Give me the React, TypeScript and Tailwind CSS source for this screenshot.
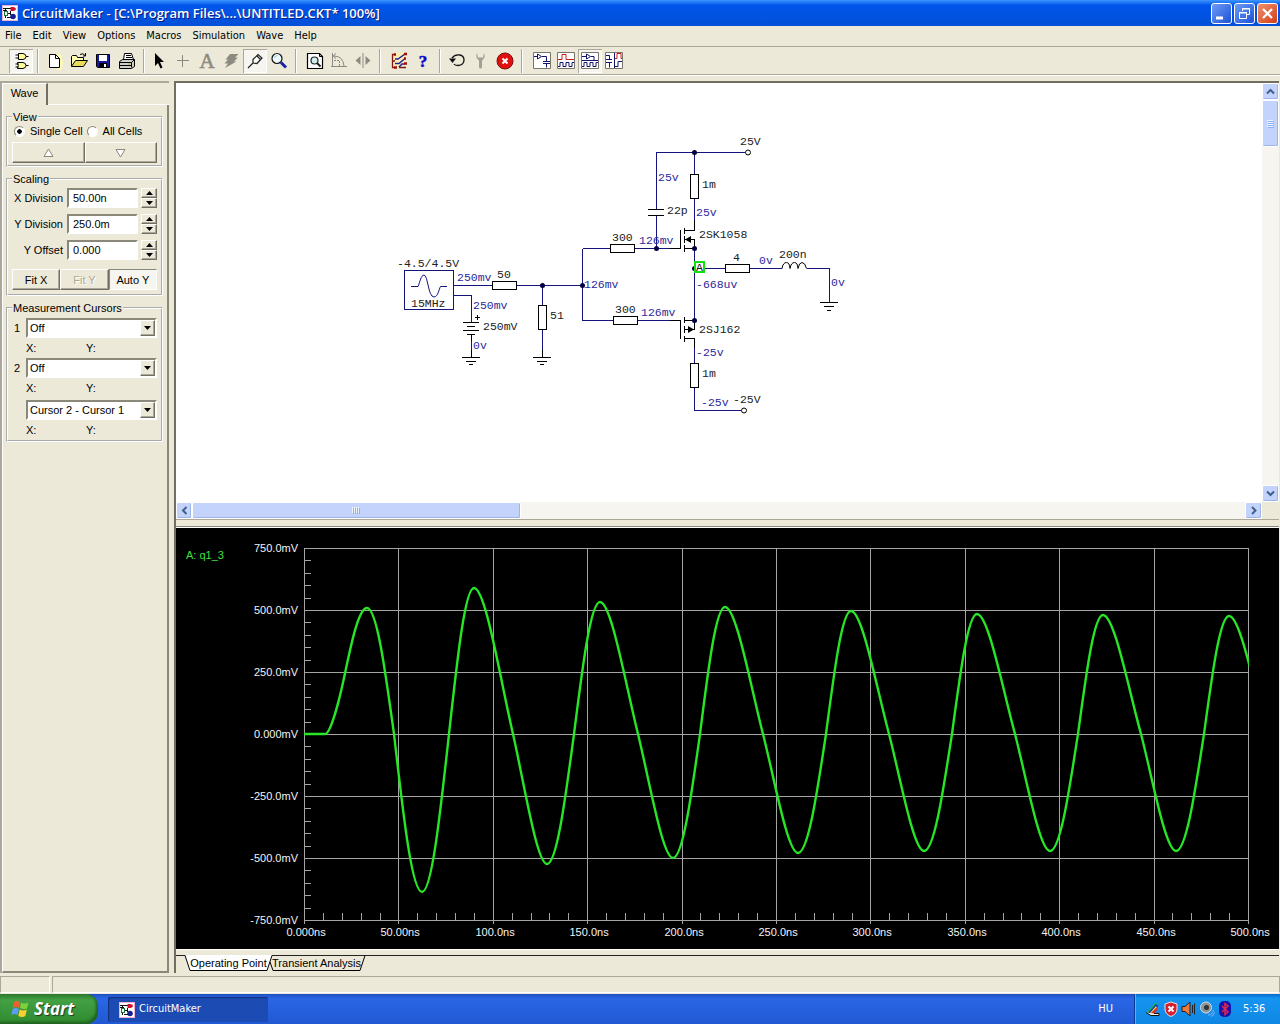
import React from "react";

const ui = "font-['DejaVu_Sans_Condensed','DejaVu_Sans',sans-serif]";
const sunken =
  "border-2 border-t-[#8a8878] border-l-[#8a8878] border-r-white border-b-white";
const raised =
  "border border-t-white border-l-white border-r-[#716f64] border-b-[#716f64] shadow-[inset_-1px_-1px_0_#aca899]";
const pressed =
  "border border-t-[#8a8878] border-l-[#8a8878] border-r-white border-b-white bg-[#f6f5f0]";

/* ---------- icons ---------- */

function AppIcon() {
  return (
    <svg width="16" height="16" viewBox="0 0 16 16" aria-hidden="true">
      <rect width="16" height="16" fill="#f0b4d0" />
      <rect x="1" y="1" width="14" height="14" fill="#fff" />
      <path d="M1 3.500H10M1 5.500H5M3.500 3.500V13M3.500 8.500H9M5 12.500H10" stroke="#111" fill="none" />
      <rect x="2.500" y="6.500" width="3" height="4" fill="#fff" stroke="#137a3a" />
      <path d="M8.500 2h3q2.500 .5 2.500 2t-2.500 2h-3z" fill="#d01030" />
      <circle cx="11" cy="11.500" r="2.800" fill="#182090" />
      <path d="M8.500 6v4" stroke="#111" />
    </svg>
  );
}

const toolIcons: Record<string, React.ReactNode> = {
  parts: (
    <g fill="#ffff9c" stroke="#000">
      <path d="M9.500 4.500H14q3 .5 3 3t-3 3H9.500z" />
      <path d="M6.500 6h3M6.500 9h3M17 7.500h2.500" />
      <path d="M8.500 13.500H14q3 .5 3 3t-3 3H8.500q1.500-3 0-6z" />
      <path d="M6.500 15h3M6.500 18h3M17 16.500h2.500" />
    </g>
  ),
  new: (
    <>
      <path d="M15 4l4 3v3l1 4-2 7h-4z" fill="#fffbb0" />
      <path d="M6.500 5.500h6l4 4v9h-10z" fill="#fff" stroke="#000" />
      <path d="M12.500 5.500v4h4" fill="none" stroke="#000" />
    </>
  ),
  open: (
    <g stroke="#000">
      <path d="M4.500 17.500v-10l1-1h4l1 2h6v3" fill="#ffffb0" />
      <path d="M4.500 17.500l4-6h12l-4 6z" fill="#e6dc5a" />
      <path d="M13 5.500q3-2 5 1M18.500 4v3H16" fill="none" />
    </g>
  ),
  save: (
    <>
      <path d="M5.500 5.500h13v13h-12l-1-1z" fill="#1818a0" stroke="#000" />
      <rect x="8" y="6" width="8" height="6" fill="#fff" />
      <rect x="8" y="14" width="8" height="4" fill="#000" />
      <rect x="13" y="15" width="2" height="3" fill="#fff" />
    </>
  ),
  print: (
    <g stroke="#000">
      <path d="M8.500 10.500l1-6h7l2 6" fill="#fff" />
      <path d="M11 6.500h5M11 8.500h6" />
      <path d="M4.500 12.500l3-2h12v7l-3 2h-12z" fill="#cfcfc8" />
      <path d="M4.500 13.500h12v5M5 16.500h11M16.500 13.500l3-3" fill="none" />
      <path d="M13 15h2" stroke="#c8b400" />
    </g>
  ),
  pointer: <path d="M8 4v13l3-3 2.500 5.500 2-1L13 13h4z" fill="#000" />,
  wire: <path d="M6 11.500h12M11.500 6v12" stroke="#8d8b80" />,
  text: (
    <text x="12" y="19" textAnchor="middle" fontSize="21" fontFamily="Liberation Serif, serif" fill="#8d8b80" stroke="#8d8b80" strokeWidth="0.600">
      A
    </text>
  ),
  bolt: <path d="M11 5h8.500l-3.500 3.500h3l-4 4h2.500L6 19l3-4.500H5.500L9 10.500H6.500z" fill="#8d8b80" />,
  probe: (
    <path d="M5 19l5-5M10 10.500l5-5 4 3.500-5 5.500-4-.5zM13.500 6.500l4 4" fill="#fff" stroke="#222" strokeWidth="1.200" />
  ),
  zoom: (
    <>
      <circle cx="10" cy="9.500" r="5" fill="#eef8ff" stroke="#111" strokeWidth="1.200" />
      <path d="M14 13.500l5 5" stroke="#1a22a8" strokeWidth="3" />
      <path d="M7.500 9q.5-2.500 3-2.500" stroke="#7fc4d8" fill="none" />
    </>
  ),
  fit: (
    <>
      <path d="M4.500 4.500h12l3 3v12h-15z" fill="#fff" stroke="#000" strokeWidth="1.200" />
      <path d="M16.500 4.500v3h3" fill="none" stroke="#000" />
      <circle cx="11.500" cy="11.500" r="3.500" fill="#cfeef0" stroke="#222" strokeWidth="1.200" />
      <path d="M14 14l3.500 3.500" stroke="#222" strokeWidth="2" />
    </>
  ),
  rotate: (
    <g fill="none" stroke="#8d8b80">
      <path d="M5.500 4v14M4 17.500h16M9 4.500l-3 2.500 3 2.500" />
      <path d="M7 7q9 0 10 10" />
      <path d="M7 11.500h5.500v6" strokeDasharray="2 1" />
    </g>
  ),
  mirror: (
    <>
      <path d="M9.500 7v9L4.500 11.500zM14.500 7v9l5-4.500z" fill="#8d8b80" />
      <path d="M12 4v15" stroke="#8d8b80" />
    </>
  ),
  run: (
    <>
      <rect x="4" y="4" width="15" height="15" fill="#fdeeb0" />
      <path d="M8 5.500H5.500v13H8M5.500 12H8M12 18.500h7" fill="none" stroke="#801818" strokeWidth="1.300" />
      <path d="M8 10h3l7-5M8 14.500h4l6-5M12 18l3-3h3" fill="none" stroke="#2222a0" strokeWidth="1.500" />
      <path d="M17 5h3M17 9.500h2M17 14.500h3M7 5.500h2M7 18.500h3" stroke="#a01010" strokeWidth="2.500" />
    </>
  ),
  help: (
    <text x="12" y="18" textAnchor="middle" fontSize="17" fontWeight="700" fontFamily="Liberation Serif, serif" fill="#0a0ac8" stroke="#0a0ac8" strokeWidth="0.500">
      ?
    </text>
  ),
  reset: (
    <>
      <path d="M7 9q3-4 8-3 4 1 4 5 0 5-6 5.500-3 0-4-1.500" fill="none" stroke="#111" strokeWidth="1.300" />
      <path d="M4 9.500h7L7.500 14z" fill="#111" />
    </>
  ),
  tool: (
    <path d="M8 4q-2 4 1.500 7l.5 1v6q0 1.500 1.500 1.500T13 18v-6l.5-1Q17 8 15 4l-1 4.500h-5z" fill="#a3a196" />
  ),
  stop: (
    <>
      <circle cx="12" cy="12" r="8" fill="#e01010" stroke="#7c0c0c" />
      <path d="M9.500 9.500l5 5M14.500 9.500l-5 5" stroke="#fff" strokeWidth="2" />
    </>
  ),
  schematic: (
    <g fill="none">
      <path d="M3.500 3.500h17v16h-17z" fill="#fff" stroke="#77756c" />
      <path d="M4 7.500h3M7.500 5v5l4-2.500zM12 7.500h4.500v5M13 12.500h7M13 14.500h7M16.500 14.500v4" stroke="#15156a" />
    </g>
  ),
  waves: (
    <g fill="none">
      <path d="M3.500 3.500h17v16h-17z" fill="#fff" stroke="#77756c" />
      <path d="M4 10.500h4v-5h4v5h8" stroke="#d01818" />
      <path d="M4 17.500h2v-4h3v4h3v-4h3v4h3v-4h2" stroke="#15156a" />
    </g>
  ),
  splitH: (
    <g fill="none">
      <path d="M3.500 3.500h17v16h-17z" fill="#fff" stroke="#77756c" />
      <path d="M4 7.500h4M8.500 5v5l4-2.500zM13 7.500h3v4M4 11.500h16M4 17.500h2v-4h3v4h3v-4h3v4h3v-4h2" stroke="#15156a" />
    </g>
  ),
  splitV: (
    <g fill="none">
      <path d="M3.500 3.500h17v16h-17z" fill="#fff" stroke="#77756c" />
      <path d="M4 6.500h3.500v4M4 10.500h6M4 13.500h6M7.500 13.500v5M12.500 4v15" stroke="#15156a" />
      <path d="M13 9.500h2v-5h4v5h1" stroke="#d01818" />
      <path d="M13 17.500h3v-5h4" stroke="#15156a" />
    </g>
  ),
};

const toolGroups: { lead: string; items: [string, string, boolean?][] }[] = [
  { lead: "pl-[9px]", items: [["parts", "Parts", true]] },
  { lead: "pl-1", items: [["new", "New"], ["open", "Open"], ["save", "Save"], ["print", "Print"]] },
  {
    lead: "pl-0.5",
    items: [["pointer", "Arrow"], ["wire", "Wire"], ["text", "Text"], ["bolt", "Delete"], ["probe", "Probe", true], ["zoom", "Zoom"]],
  },
  { lead: "pl-1.5", items: [["fit", "Fit to window"], ["rotate", "Rotate"], ["mirror", "Mirror"]] },
  { lead: "pl-1.5", items: [["run", "Mode"], ["help", "Help"]] },
  { lead: "pl-1", items: [["reset", "Reset"], ["tool", "Step"], ["stop", "Stop"]] },
  {
    lead: "pl-[7px]",
    items: [["schematic", "Schematic"], ["waves", "Waveforms"], ["splitH", "Split horizontally", true], ["splitV", "Split vertically"]],
  },
];

function Toolbar() {
  return (
    <div className="flex h-7 shrink-0 items-center border-b border-[#aca899]" role="toolbar">
      {toolGroups.map((g, i) => (
        <React.Fragment key={i}>
          {i > 0 && <div className="ml-1 h-6 w-0.5 border-l border-[#aca899] border-r border-r-white" />}
          <div className={`flex ${g.lead}`}>
            {g.items.map(([icon, label, on]) => (
              <button
                key={icon}
                aria-label={label}
                className={`flex size-6 items-center justify-center ${on ? "bg-[#f6f5f0] shadow-[inset_1px_1px_0_#aca899,inset_-1px_-1px_0_#ffffff]" : ""}`}
              >
                <svg width="24" height="24" viewBox="0 0 24 24" fill="none" aria-hidden="true">
                  {toolIcons[icon]}
                </svg>
              </button>
            ))}
          </div>
        </React.Fragment>
      ))}
    </div>
  );
}

function TitleBar() {
  const base = "flex size-[21px] items-center justify-center rounded-[3px] border border-white";
  return (
    <header className="flex h-[26px] shrink-0 items-center bg-linear-to-b from-[#3d95ff] via-[#0055ea] via-20% to-[#0250d8] px-0.5">
      <AppIcon />
      <h1 className="ml-1 flex-1 pt-px font-['Open_Sans',sans-serif] text-[13px] font-semibold text-white [text-shadow:1px_1px_0_#0a1883]">
        CircuitMaker - [C:\Program Files\...\UNTITLED.CKT* 100%]
      </h1>
      <div className="flex gap-0.5">
        <button aria-label="Minimize" className={`${base} bg-linear-to-br from-[#6f9af5] to-[#1c4fd8]`}>
          <svg width="19" height="19" viewBox="0 0 19 19"><path d="M4 14h7" stroke="#fff" strokeWidth="3" /></svg>
        </button>
        <button aria-label="Restore" className={`${base} bg-linear-to-br from-[#6f9af5] to-[#1c4fd8]`}>
          <svg width="19" height="19" viewBox="0 0 19 19" fill="none" stroke="#fff">
            <path d="M7.500 7V4.500h7v6H12" /><path d="M7 5h8" /><path d="M4.500 8.500h7v6h-7z" /><path d="M4 9h8" />
          </svg>
        </button>
        <button aria-label="Close" className={`${base} bg-linear-to-br from-[#f0906c] to-[#d23a10]`}>
          <svg width="19" height="19" viewBox="0 0 19 19"><path d="M5 5l9 9M14 5l-9 9" stroke="#fff" strokeWidth="2.200" /></svg>
        </button>
      </div>
    </header>
  );
}

/* ---------- side panel ---------- */

function Group({ title, className, children }: { title: string; className: string; children: React.ReactNode }) {
  return (
    <fieldset className={`mr-1 ml-[3px] border-2 border-white px-1 [border-style:groove] ${className}`}>
      <legend className="h-3 px-px leading-3">{title}</legend>
      {children}
    </fieldset>
  );
}

function Spin({ id, label, value }: { id: string; label: string; value: string }) {
  return (
    <div className="flex h-5 items-center">
      <label htmlFor={id} className="flex-1 pr-1 text-right leading-4 whitespace-nowrap">{label}</label>
      <input id={id} defaultValue={value} className={`h-5 w-[71px] rounded-none bg-white px-1 text-[11px] outline-none ${sunken}`} />
      <div className="ml-[3px] flex h-5 w-4 flex-col">
        {["up", "down"].map((d) => (
          <button key={d} aria-label={`${label} ${d}`} className={`flex flex-1 items-center justify-center ${raised}`}>
            <svg width="7" height="4" viewBox="0 0 7 4"><path d={d === "up" ? "M0 4h7L3.500 0z" : "M0 0h7L3.500 4z"} /></svg>
          </button>
        ))}
      </div>
    </div>
  );
}

function Choice({ label, value, mark }: { label: string; value: string; mark?: string }) {
  return (
    <div className="flex h-5 items-center">
      <span className="w-[14px] pl-0.5">{mark}</span>
      <div className="relative h-5 flex-1">
        <select aria-label={label} className={`h-5 w-full appearance-none rounded-none bg-white pl-0.5 text-[11px] outline-none ${sunken}`}>
          <option>{value}</option>
        </select>
        <span className={`pointer-events-none absolute top-0.5 right-0.5 flex h-4 w-[15px] items-center justify-center bg-[#ece9d8] ${raised}`}>
          <svg width="7" height="4" viewBox="0 0 7 4"><path d="M0 0h7L3.500 4z" /></svg>
        </span>
      </div>
    </div>
  );
}

function XY({ className }: { className: string }) {
  return (
    <div className={`flex items-center pl-[14px] ${className}`}>
      <span className="w-[60px]">X:</span>
      <span>Y:</span>
    </div>
  );
}

function Radio({ label, on }: { label: string; on?: boolean }) {
  return (
    <label className="flex items-center">
      <input
        type="radio"
        name="view"
        defaultChecked={on}
        className="mr-[5px] size-[11px] appearance-none rounded-full border border-[#8a8878] border-r-white border-b-white bg-white checked:bg-[radial-gradient(circle,#000_2px,#fff_2.500px)]"
      />
      {label}
    </label>
  );
}

function SidePanel() {
  const btn = "flex h-[21px] flex-1 items-center justify-center";
  return (
    <aside className="flex w-[169px] shrink-0 flex-col border-t-2 border-l-2 border-[#aca899] font-['Liberation_Sans',sans-serif] text-[11px] leading-3">
      <div className="flex h-[22px]">
        <button className="w-[46px] border-t border-l border-white border-r-2 border-r-[#716f64] pb-[3px] text-center">Wave</button>
        <div className="flex-1 border-b border-white" />
      </div>
      <div className="flex-1 border-r-2 border-b-2 border-l border-[#8a8878] border-l-white pt-1.5">
        <Group title="View" className="pb-0.5">
          <div className="mt-px flex h-[14px] items-center gap-1 pl-0.5">
            <Radio label="Single Cell" on />
            <Radio label="All Cells" />
          </div>
          <div className="mt-1 flex">
            <button aria-label="Previous cell" className={`${btn} ${raised}`}>
              <svg width="11" height="10" viewBox="0 0 11 10"><path d="M1 8.500h9L5.500 1z" fill="#fff" stroke="#8a8878" /></svg>
            </button>
            <button aria-label="Next cell" className={`${btn} ${raised}`}>
              <svg width="11" height="10" viewBox="0 0 11 10"><path d="M1 1.500h9L5.500 9z" fill="#fff" stroke="#8a8878" /></svg>
            </button>
          </div>
        </Group>
        <Group title="Scaling" className="mt-1.5 pb-1">
          <div className="mt-[3px] flex flex-col gap-1.5">
            <Spin id="xdiv" label="X Division" value="50.00n" />
            <Spin id="ydiv" label="Y Division" value="250.0m" />
            <Spin id="yoff" label="Y Offset" value="0.000" />
          </div>
          <div className="mt-[9px] flex">
            <button className={`${btn} ${raised}`}>Fit X</button>
            <button disabled className={`${btn} ${raised} text-[#aca899] [text-shadow:1px_1px_0_#fff]`}>Fit Y</button>
            <button aria-pressed="true" className={`${btn} ${pressed}`}>Auto Y</button>
          </div>
        </Group>
        <Group title="Measurement Cursors" className="mt-1.5">
          <div className="pt-1">
            <Choice label="Cursor 1" value="Off" mark="1" />
            <XY className="h-5" />
            <Choice label="Cursor 2" value="Off" mark="2" />
            <XY className="mb-0.5 h-5" />
            <Choice label="Cursor difference" value="Cursor 2 - Cursor 1" />
            <XY className="h-5" />
          </div>
        </Group>
      </div>
    </aside>
  );
}

/* ---------- schematic ---------- */

const notes: [number, number, string, boolean?][] = [
  [397, 267, "-4.5/4.5V"], [411, 307, "15MHz"], [497, 278, "50"], [550, 319, "51"], [483, 330, "250mV"],
  [612, 241, "300"], [615, 313, "300"], [667, 214, "22p"], [702, 188, "1m"], [702, 377, "1m"],
  [740, 145, "25V"], [733, 403, "-25V"], [699, 238, "2SK1058"], [699, 333, "2SJ162"], [733, 261, "4"], [779, 258, "200n"],
  [457, 281, "250mv", true], [473, 309, "250mv", true], [473, 349, "0v", true], [584, 288, "126mv", true],
  [639, 244, "126mv", true], [641, 316, "126mv", true], [658, 181, "25v", true], [696, 216, "25v", true],
  [696, 288, "-668uv", true], [696, 356, "-25v", true], [701, 406, "-25v", true], [759, 264, "0v", true], [831, 286, "0v", true],
];

function Schematic() {
  return (
    <svg width="1086" height="419" viewBox="176 83 1086 419" fill="none" role="img" aria-label="Circuit schematic">
      <g stroke="#14147c" shapeRendering="crispEdges">
        <path d="M404.500 270.500h49v39h-49z" />
        <path d="M454 285.500h38M454 295.500h17.500V322M517 285.500h65.500M542.500 285v20M542.500 330v28M471.500 340v17M582.500 248.500V320.500M582.500 248.500H610M582.500 320.500H613" />
        <path d="M635 248.500h45M638 320.500h42M656.500 248V216M656.500 209V152.500H745M694.500 152v22M694.500 199v32M694.500 249v71M700 268.500h25M750 268.500h32M807 268.500h22.500V302M694.500 345v18M694.500 388v22.500H741" />
      </g>
      <path d="M411 286.500h7C420 282 421 275 424 275c4 0 4 22 10 22 4 0 5-8 6.500-10.500H447" stroke="#14147c" />
      <g stroke="#000" shapeRendering="crispEdges">
        <path d="M492.500 281.500h24v8h-24zM538.500 305.500h8v24h-8zM610.500 244.500h24v8h-24zM613.500 316.500h24v8h-24zM690.500 174.500h8v24h-8zM690.500 363.500h8v24h-8zM725.500 264.500h24v8h-24z" />
        <path d="M463 322.500h16M467 326.500h8M463 330.500h16M467 334.500h8M471.500 335v6M475 317.500h5M477.500 315v5" />
        <path d="M462 357.500h18M466 361.500h10M469 364.500h4M533 357.500h18M537 361.500h10M540 364.500h4M820 302.500h18M824 306.500h10M827 310.500h4" />
        <path d="M648 209.500h16M648 215.500h16" />
        <path d="M670 248.500h10.500V230M684.500 228v6M684.500 236v7M684.500 245v7M684 230.500h10.500V220M684 239.500h10.500M684 248.500h10.500V239" />
        <path d="M670 320.500h10.500V339M684.500 317v6M684.500 326v7M684.500 336v6M684 320.500h10.500V329.500H684M684 338.500h10.500V348" />
        <path d="M542.500 350v8M471.500 350v7" />
      </g>
      <path d="M685 239.500l6-3.500v7zM694 329.500l-6-3.500v7z" fill="#000" />
      <path d="M782 268.500q1-6 4.500-6 3 0 3.500 6 1-6 4.500-6 3 0 3.500 6 1-6 4-6 3 0 4.500 6" stroke="#000" />
      <g fill="#000040">
        {[[542, 285], [582, 285], [656, 248], [694, 152], [694, 248], [694, 268], [694, 320]].map(([x, y]) => (
          <circle key={`${x}-${y}`} cx={x + 0.5} cy={y + 0.5} r="2.500" />
        ))}
      </g>
      <circle cx="748" cy="152.500" r="2.500" fill="#fff" stroke="#000" />
      <circle cx="744" cy="410.500" r="2.500" fill="#fff" stroke="#000" />
      <g fontFamily="Liberation Mono, monospace" fontSize="11.500">
        {notes.map(([x, y, t, net], i) => (
          <text key={i} x={x} y={y} fill={net ? "#2a2a9c" : "#222"}>{t}</text>
        ))}
        <rect x="695" y="262" width="9" height="10" fill="#fff" stroke="#10e010" strokeWidth="2" />
        <text x="696" y="271" fill="#111">A</text>
      </g>
    </svg>
  );
}

/* ---------- waveform ---------- */

const ZERO = 734;
/* Alternating extremes of the trace: x, y and the x where it next crosses zero. */
const extremes: [number, number, number][] = [
  [367, 608, 394], [422, 892, 449], [474, 588, 513], [547, 864, 574], [600, 602, 638], [673, 858, 700],
  [725, 607, 763], [798, 853, 826], [851, 611, 889], [924, 851, 952], [977, 614, 1015], [1050, 851, 1078],
  [1103, 615, 1141], [1176, 851, 1204], [1229, 616, 1267],
];

function tracePath() {
  let d = "M304 734H325C330 734 338 706 344 678C350 650 358 608 367 608";
  extremes.forEach(([x, y, cross], i) => {
    const soft = i % 2 === 0 && i > 0;
    const lead = soft ? 0.3 : 0.361;
    const rise = soft ? 0.62 : 0.488;
    const w = cross - x;
    const h = ZERO - y;
    d += `C${x + w * lead} ${y} ${x + w * 0.67} ${y + h * rise} ${cross} ${ZERO}`;
    const next = extremes[i + 1];
    if (next) {
      const nw = next[0] - cross;
      const nh = next[1] - ZERO;
      d += `C${cross + nw * 0.33} ${ZERO + nh * (1 - rise)} ${next[0] - nw * lead} ${next[1]} ${next[0]} ${next[1]}`;
    }
  });
  return d;
}

const xLabels = ["0.000ns", "50.00ns", "100.0ns", "150.0ns", "200.0ns", "250.0ns", "300.0ns", "350.0ns", "400.0ns", "450.0ns", "500.0ns"];
const yLabels = ["750.0mV", "500.0mV", "250.0mV", "0.000mV", "-250.0mV", "-500.0mV", "-750.0mV"];

function WaveChart() {
  const gx = (i: number) => Math.round(304 + i * 94.4) + 0.5;
  return (
    <svg className="block w-full" viewBox="176 528 1103 421" preserveAspectRatio="xMinYMin meet" role="img" aria-label="Transient analysis waveform">
      <clipPath id="plot"><rect x="304" y="548" width="945" height="373" /></clipPath>
      <g stroke="#a4a4a4" shapeRendering="crispEdges">
        {xLabels.map((_, i) => <path key={i} d={`M${gx(i)} 548V924`} />)}
        {yLabels.map((_, i) => <path key={i} d={`M304 ${548.5 + i * 62}H1249`} />)}
        {Array.from({ length: 30 }, (_, i) => <path key={i} d={`M304 ${Math.round(548 + i * 12.4) + 0.5}h7`} />)}
        {Array.from({ length: 50 }, (_, i) => <path key={i} d={`M${Math.round(304 + i * 18.88) + 0.5} 913v7`} />)}
      </g>
      <path d={tracePath()} fill="none" stroke="#26e626" strokeWidth="2.400" clipPath="url(#plot)" />
      <g fontFamily="Liberation Sans, sans-serif" fontSize="11" fill="#f4f4f4">
        {yLabels.map((t, i) => <text key={t} x="298" y={552 + i * 62} textAnchor="end">{t}</text>)}
        {xLabels.map((t, i) => <text key={t} x={gx(i) - 18} y="936">{t}</text>)}
        <text x="186" y="559" fill="#3fe03f">A: q1_3</text>
      </g>
    </svg>
  );
}

/* ---------- document area ---------- */

const scrollBtn =
  "flex shrink-0 items-center justify-center rounded-[2px] border border-white bg-[#c3d3fb] shadow-[inset_-1px_-1px_0_#9fb5ea]";

function Arrow({ d }: { d: string }) {
  return <svg width="9" height="9" viewBox="0 0 9 9" fill="none"><path d={d} stroke="#42608c" strokeWidth="2" /></svg>;
}

function Documents() {
  return (
    <section className="mr-px flex min-w-0 flex-1 flex-col border-t-2 border-l-2 border-[#716f64]">
      <div className="flex h-[419px] min-w-0 bg-white">
        <div className="min-w-0 flex-1 overflow-hidden"><Schematic /></div>
        <div className="flex w-[17px] shrink-0 flex-col bg-[#f6f5f0]">
          <button aria-label="Scroll up" className={`h-[17px] ${scrollBtn}`}><Arrow d="M1 6.500l3.500-3.500L8 6.500" /></button>
          <div className={`h-[47px] ${scrollBtn}`}>
            <svg width="7" height="8" viewBox="0 0 7 8"><path d="M0 .5h6M0 2.500h6M0 4.500h6M0 6.500h6" stroke="#eef4fe" /><path d="M1 1.500h6M1 3.500h6M1 5.500h6M1 7.500h6" stroke="#8cb0f8" /></svg>
          </div>
          <div className="flex-1" />
          <button aria-label="Scroll down" className={`h-[17px] ${scrollBtn}`}><Arrow d="M1 2.500L4.500 6 8 2.500" /></button>
        </div>
      </div>
      <div className="flex h-[17px] shrink-0 bg-[#f6f5f0]">
        <button aria-label="Scroll left" className={`w-4 ${scrollBtn}`}><Arrow d="M6.500 1L3 4.500 6.500 8" /></button>
        <div className={`w-[329px] ${scrollBtn}`}>
          <svg width="9" height="7" viewBox="0 0 9 7"><path d="M.5 0v6M2.500 0v6M4.500 0v6M6.500 0v6" stroke="#eef4fe" /><path d="M1.500 1v6M3.500 1v6M5.500 1v6M7.500 1v6" stroke="#8cb0f8" /></svg>
        </div>
        <div className="flex-1" />
        <button aria-label="Scroll right" className={`w-[17px] ${scrollBtn}`}><Arrow d="M3 1l3.500 3.500L3 8" /></button>
        <div className="w-[17px] bg-[#ece9d8]" />
      </div>
      <div className="h-2 shrink-0 border-t border-b border-t-[#aca899] border-b-[#8a8878] bg-[#ece9d8]" />
      <div className="border-t border-white bg-black"><WaveChart /></div>
      <div className="h-[7px] shrink-0 border-t border-b border-t-white border-b-[#222] bg-[#ece9d8]" />
      <div className="flex flex-1 pl-2 font-['Liberation_Sans',sans-serif] text-[11px] leading-[14px]" role="tablist">
        <button role="tab" aria-selected="true" className="relative -mt-px h-4 w-[89px]">
          <svg className="absolute inset-0" width="89" height="16" viewBox="0 0 89 16" aria-hidden="true">
            <path d="M1 0l5 15.500h77L88 0z" fill="#fff" /><path d="M1 .5l5 15h77L88 .5" fill="none" stroke="#000" />
          </svg>
          <span className="relative whitespace-nowrap">Operating Point</span>
        </button>
        <button role="tab" aria-selected="false" className="relative -mt-px -ml-1.5 h-4 w-[99px]">
          <svg className="absolute inset-0" width="99" height="16" viewBox="0 0 99 16" aria-hidden="true">
            <path d="M3 7l3 8.500h87L98 .5" fill="none" stroke="#000" />
          </svg>
          <span className="relative whitespace-nowrap">Transient Analysis</span>
        </button>
      </div>
    </section>
  );
}

/* ---------- taskbar ---------- */

function Taskbar() {
  return (
    <footer className={`flex h-[30px] shrink-0 bg-linear-to-b from-[#1f4fc0] via-[#2a66e4] via-15% to-[#2159d4] text-[11px] text-white ${ui}`}>
      <button className="flex w-[98px] items-center rounded-r-xl bg-linear-to-b from-[#2c7a2c] via-[#43a043] via-20% to-[#2f8a2f] pl-[11px] shadow-[inset_-2px_-2px_3px_#1d5f1d]">
        <svg width="19" height="18" viewBox="0 0 19 18" aria-hidden="true">
          <path d="M3 2q3-2 6 0L8 8q-3-2-6 0z" fill="#f0602c" />
          <path d="M10 2.500q3 2 7.500 0L16 8.500q-3 1.500-7-.5z" fill="#7ed03c" />
          <path d="M1.500 9q3-2 6.300 0l-1.300 6q-3-2-6 0z" fill="#5c9cf4" />
          <path d="M8.800 9.500q3 2 7 .3L14.300 16q-3 1.800-7 0z" fill="#fcd030" />
        </svg>
        <span className="ml-1 font-['Open_Sans',sans-serif] text-[17px] leading-6 font-bold italic [text-shadow:1px_1px_1px_#1a3a1a]">Start</span>
      </button>
      <button className="mt-[3px] ml-[10px] flex h-[25px] w-[160px] items-center gap-1 rounded-[2px] bg-[#1c4bb4] pl-[11px] shadow-[inset_1px_1px_1px_#12307c]">
        <AppIcon />
        <span>CircuitMaker</span>
      </button>
      <div className="flex-1" />
      <button className="mr-[21px]">HU</button>
      <div className="flex w-[146px] items-center gap-0.5 border-l border-[#0a3c9c] bg-linear-to-b from-[#0c6cd0] via-[#1594f0] via-15% to-[#0f86e4] pl-2.5 shadow-[inset_1px_0_0_#3cc0fc]">
        <svg width="16" height="16" viewBox="0 0 16 16" aria-hidden="true">
          <path d="M1 12L11 1l1 2-6 10z" fill="#14b84c" /><path d="M3 12l8-9 2 2-4 8z" fill="#1a2cc0" /><path d="M5 12l6-7 1 2-4 6z" fill="#e8e040" /><path d="M6 12l6-6v3l-3 4z" fill="#e02c2c" />
          <path d="M1 11.500l5 3h8v-2H9" stroke="#111" fill="#f0f0e4" />
        </svg>
        <svg width="16" height="16" viewBox="0 0 16 16" aria-hidden="true">
          <path d="M8 1l6 2v5q0 5-6 7.500Q2 13 2 8V3z" fill="#d42030" stroke="#f4dede" /><path d="M5.500 5.500l5 5M10.500 5.500l-5 5" stroke="#fff" strokeWidth="2" />
        </svg>
        <svg width="16" height="16" viewBox="0 0 16 16" aria-hidden="true">
          <path d="M1 5.500h3l5-4.500v14l-5-4.500H1z" fill="#f07838" stroke="#222" /><path d="M11.500 4v8M13.500 2.500v11" stroke="#222" fill="none" />
        </svg>
        <svg width="16" height="16" viewBox="0 0 16 16" aria-hidden="true">
          <ellipse cx="7" cy="6.500" rx="5.500" ry="5.500" fill="#8c9498" stroke="#d8dce0" /><circle cx="7.500" cy="6.500" r="2.500" fill="#2c3438" /><path d="M9 14q5 0 5.500-5M12 15.500q3-1 3.500-4" stroke="#7ab4fc" fill="none" />
        </svg>
        <svg width="16" height="16" viewBox="0 0 16 16" aria-hidden="true">
          <rect x="2" y="0" width="12" height="16" rx="5" fill="#1414b0" /><path d="M5 5l6 6L8 13.500v-11l3 2.500-6 6" fill="none" stroke="#e42848" strokeWidth="1.500" />
        </svg>
        <time className="ml-2">5:36</time>
      </div>
    </footer>
  );
}

const menus = ["File", "Edit", "View", "Options", "Macros", "Simulation", "Wave", "Help"];

export default function App() {
  return (
    <div className="flex min-h-screen flex-col bg-[#ece9d8] text-black">
      <TitleBar />
      <nav className={`flex h-[21px] shrink-0 items-center gap-[11px] border-b border-[#aca899] pl-[5px] text-[11px] ${ui}`}>
        {menus.map((m) => <button key={m}>{m}</button>)}
      </nav>
      <Toolbar />
      <div className="h-1.5 shrink-0 border-t border-white" />
      <main className="flex flex-1 gap-[5px]">
        <SidePanel />
        <Documents />
      </main>
      <div className="mt-[3px] flex h-[18px] shrink-0 gap-0.5 pb-px" role="status">
        <div className="w-[50px] border border-[#aca899] border-r-white border-b-white" />
        <div className="flex-1 border border-[#aca899] border-b-white" />
      </div>
      <Taskbar />
    </div>
  );
}
